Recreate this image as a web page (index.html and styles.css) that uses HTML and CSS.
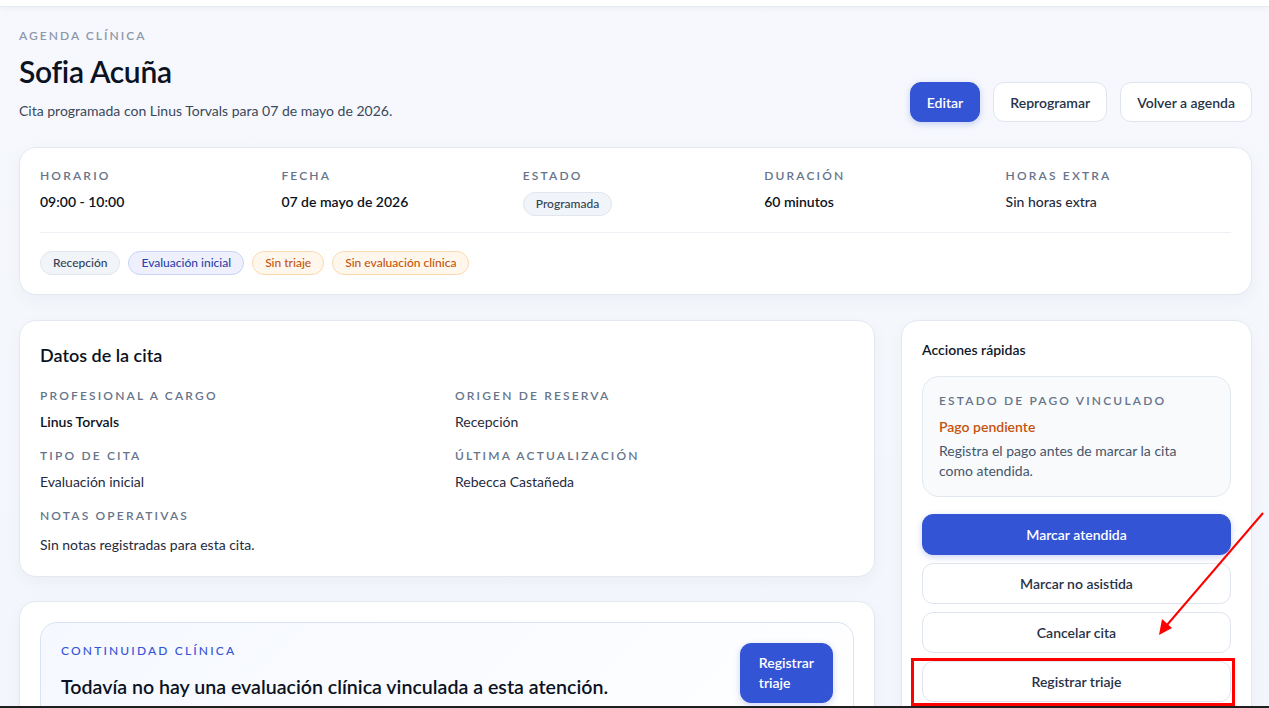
FILE: index.html
```
<!DOCTYPE html>
<html lang="es">
<head>
  <meta charset="UTF-8">
  <title>Sofia Acuña - Agenda clínica</title>
  <link rel="stylesheet" href="styles.css">
</head>
<body>
<div class="topbar"></div>

<main class="page">
  <header class="page-head">
    <div class="head-text">
      <p class="eyebrow">Agenda clínica</p>
      <h1 class="patient-name">Sofia Acuña</h1>
      <p class="subtitle">Cita programada con Linus Torvals para 07 de mayo de 2026.</p>
    </div>
    <div class="head-actions">
      <button class="btn btn-primary">Editar</button>
      <button class="btn btn-outline">Reprogramar</button>
      <button class="btn btn-outline">Volver a agenda</button>
    </div>
  </header>

  <section class="card summary">
    <div class="summary-grid">
      <div class="field">
        <span class="label">Horario</span>
        <span class="value strong">09:00 - 10:00</span>
      </div>
      <div class="field">
        <span class="label">Fecha</span>
        <span class="value strong">07 de mayo de 2026</span>
      </div>
      <div class="field">
        <span class="label">Estado</span>
        <span><span class="chip chip-gray">Programada</span></span>
      </div>
      <div class="field">
        <span class="label">Duración</span>
        <span class="value strong">60 minutos</span>
      </div>
      <div class="field">
        <span class="label">Horas extra</span>
        <span class="value medium">Sin horas extra</span>
      </div>
    </div>
    <div class="summary-tags">
      <span class="chip chip-gray">Recepción</span>
      <span class="chip chip-indigo">Evaluación inicial</span>
      <span class="chip chip-orange">Sin triaje</span>
      <span class="chip chip-orange">Sin evaluación clínica</span>
    </div>
  </section>

  <div class="layout">
    <div class="main-col">
      <section class="card details">
        <h2 class="card-title">Datos de la cita</h2>
        <div class="details-grid">
          <div class="field">
            <span class="label">Profesional a cargo</span>
            <span class="value strong">Linus Torvals</span>
          </div>
          <div class="field">
            <span class="label">Origen de reserva</span>
            <span class="value">Recepción</span>
          </div>
          <div class="field">
            <span class="label">Tipo de cita</span>
            <span class="value">Evaluación inicial</span>
          </div>
          <div class="field">
            <span class="label">Última actualización</span>
            <span class="value">Rebecca Castañeda</span>
          </div>
          <div class="field field-wide">
            <span class="label">Notas operativas</span>
            <span class="value notes">Sin notas registradas para esta cita.</span>
          </div>
        </div>
      </section>

      <section class="card continuity">
        <div class="continuity-box">
          <div class="continuity-text">
            <span class="label label-blue">Continuidad clínica</span>
            <h3 class="continuity-title">Todavía no hay una evaluación clínica vinculada a esta atención.</h3>
          </div>
          <button class="btn btn-primary btn-tall">Registrar<br>triaje</button>
        </div>
      </section>
    </div>

    <aside class="card quick">
      <h2 class="quick-title">Acciones rápidas</h2>
      <div class="pay-box">
        <span class="label">Estado de pago vinculado</span>
        <span class="pay-status">Pago pendiente</span>
        <p class="pay-note">Registra el pago antes de marcar la cita como atendida.</p>
      </div>
      <div class="quick-buttons">
        <button class="btn btn-primary btn-block">Marcar atendida</button>
        <button class="btn btn-outline btn-block">Marcar no asistida</button>
        <button class="btn btn-outline btn-block">Cancelar cita</button>
        <button class="btn btn-outline btn-block">Registrar triaje</button>
      </div>
    </aside>
  </div>
</main>

<!-- annotation drawn over the screenshot -->
<svg class="annotation" width="1269" height="708" viewBox="0 0 1269 708">
  <rect x="912.5" y="659.5" width="321" height="45" fill="none" stroke="#ff0000" stroke-width="3"/>
  <line x1="1263" y1="513" x2="1167" y2="625" stroke="#ff0000" stroke-width="2"/>
  <polygon points="1159,635 1162,619 1172,628" fill="#ff0000"/>
  <rect x="0" y="706" width="1269" height="2" fill="#1f1f1f"/>
</svg>
</body>
</html>
```

FILE: styles.css
```
html, body {
  margin: 0;
  height: 100%;
  overflow: hidden;
}

body {
  position: relative;
  font-family: Lato, "Noto Sans", sans-serif;
  font-size: 14px;
  color: #0f172a;
  background: linear-gradient(180deg, #f6f8fd 0%, #f3f6fc 100%);
}

p, h1, h2, h3 {
  margin: 0;
}

.topbar {
  height: 6px;
  background: #ffffff;
  border-bottom: 1px solid #e6eaf1;
  box-shadow: 0 2px 6px rgba(15, 23, 42, 0.04);
}

.page {
  padding: 21px 17px 0 19px;
}

/* header */
.page-head {
  display: flex;
  justify-content: space-between;
  align-items: flex-end;
}

.eyebrow {
  font-size: 12px;
  line-height: 16px;
  font-weight: 600;
  letter-spacing: 0.17em;
  text-transform: uppercase;
  color: #8d97aa;
}

.patient-name {
  margin-top: 10px;
  font-size: 30px;
  line-height: 34px;
  font-weight: 600;
  letter-spacing: -0.01em;
  color: #0b1222;
}

.subtitle {
  margin-top: 13px;
  font-size: 14px;
  line-height: 20px;
  color: #3b475b;
}

.head-actions {
  display: flex;
  gap: 13px;
  margin-bottom: -1px;
}

/* buttons */
.btn {
  font-family: inherit;
  font-size: 14px;
  font-weight: 600;
  height: 40px;
  padding: 0 16px;
  border-radius: 11px;
  cursor: pointer;
}

.btn-primary {
  background: #3454d6;
  color: #ffffff;
  border: 1px solid #3454d6;
  box-shadow: 0 2px 6px rgba(52, 84, 214, 0.25);
}

.btn-outline {
  background: #ffffff;
  color: #273247;
  border: 1px solid #dfe5ef;
}

.btn-block {
  width: 100%;
  height: 41px;
}

.btn-tall {
  height: 60px;
  padding: 0 18px;
  line-height: 20px;
  text-align: left;
  flex-shrink: 0;
}

/* cards */
.card {
  background: #ffffff;
  border: 1px solid #e3e8f1;
  border-radius: 17px;
  box-shadow: 0 6px 18px rgba(15, 23, 42, 0.04);
}

.label {
  display: block;
  font-size: 12px;
  line-height: 16px;
  font-weight: 600;
  letter-spacing: 0.18em;
  text-transform: uppercase;
  color: #66748a;
}

.label-blue {
  color: #3454d6;
  font-weight: 500;
}

.field {
  display: flex;
  flex-direction: column;
  gap: 8px;
}

.value {
  font-size: 14px;
  line-height: 20px;
  color: #1f2a3c;
}

.value.strong {
  font-weight: 600;
  color: #0b1222;
}

.value.medium {
  font-weight: 500;
  color: #1f2a3c;
}

/* summary */
.summary {
  margin-top: 26px;
  padding: 20px 20px 19px 20px;
}

.summary-grid {
  display: grid;
  grid-template-columns: repeat(5, 1fr);
  gap: 16px;
  padding-bottom: 16px;
  border-bottom: 1px solid #edf0f5;
}

.summary-tags {
  display: flex;
  gap: 8px;
  padding-top: 18px;
}

.chip {
  display: inline-block;
  font-size: 12px;
  line-height: 22px;
  font-weight: 500;
  padding: 0 12px;
  border-radius: 999px;
  border: 1px solid transparent;
}

.chip-gray {
  background: #f1f4f8;
  border-color: #e1e6ee;
  color: #334155;
}

.chip-indigo {
  background: #eef1fd;
  border-color: #c9d2f7;
  color: #2f43a6;
}

.chip-orange {
  background: #fff7ec;
  border-color: #fbd9b0;
  color: #c4530c;
}

/* two column layout */
.layout {
  display: flex;
  gap: 26px;
  margin-top: 25px;
  align-items: flex-start;
}

.main-col {
  flex: 1;
  display: flex;
  flex-direction: column;
  gap: 24px;
}

.details {
  padding: 22px 20px 21px 20px;
}

.card-title {
  font-size: 18px;
  line-height: 24px;
  font-weight: 600;
  color: #0b1222;
}

.details-grid {
  margin-top: 21px;
  display: grid;
  grid-template-columns: 1fr 1fr;
  column-gap: 16px;
  row-gap: 16px;
}

.field-wide {
  grid-column: 1 / -1;
}

.notes {
  margin-top: 3px;
}

.continuity {
  padding: 20px 20px 40px 20px;
}

.continuity-box {
  display: flex;
  justify-content: space-between;
  align-items: flex-start;
  padding: 20px 20px 24px 20px;
  border: 1px solid #d9e3f6;
  border-radius: 17px;
  background: linear-gradient(135deg, #f5f8ff 0%, #ffffff 100%);
}

.continuity-title {
  margin-top: 14px;
  font-size: 19.6px;
  line-height: 28px;
  font-weight: 600;
  color: #0b1222;
}

/* quick actions */
.quick {
  width: 309px;
  padding: 19px 20px 20px 20px;
}

.quick-title {
  font-size: 14px;
  line-height: 20px;
  font-weight: 600;
  color: #0f172a;
}

.pay-box {
  margin-top: 16px;
  padding: 16px 28px 15px 16px;
  background: #f8fafc;
  border: 1px solid #e2e8f0;
  border-radius: 17px;
}

.pay-status {
  display: block;
  margin-top: 8px;
  font-size: 14px;
  line-height: 20px;
  font-weight: 600;
  color: #c4530c;
}

.pay-note {
  margin-top: 4px;
  font-size: 14px;
  line-height: 20px;
  color: #475569;
}

.quick-buttons {
  margin-top: 17px;
  display: flex;
  flex-direction: column;
  gap: 8px;
}

.annotation {
  position: absolute;
  top: 0;
  left: 0;
  pointer-events: none;
}
```
